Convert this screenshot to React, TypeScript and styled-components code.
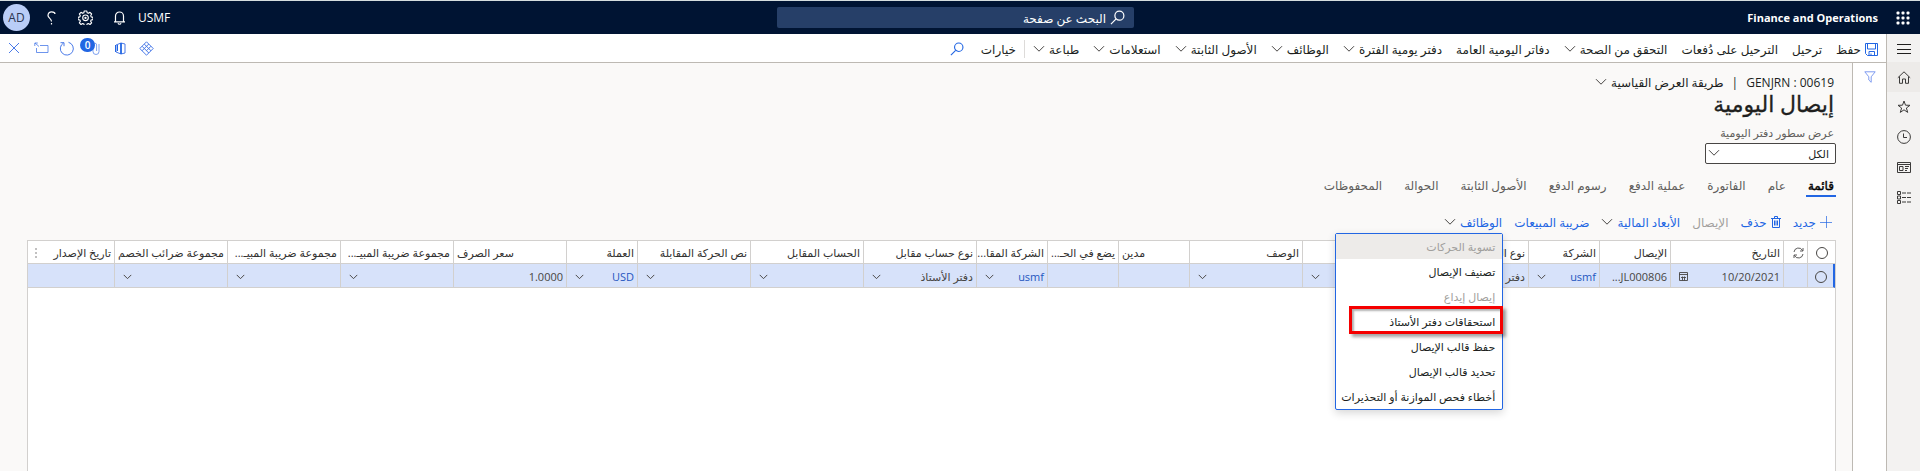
import React from 'react';
import styled, { createGlobalStyle, css } from 'styled-components';

const navy = '#001433';
const blue = '#2266e3';
const line = '#bdb9b3';
const gridLine = '#d2d0ce';

const GlobalStyle = createGlobalStyle`
  * { box-sizing: border-box; }
  body {
    margin: 0;
    background: #faf9f8;
    color: #201f1e;
    font-family: "Open Sans", "DejaVu Sans", sans-serif;
    font-size: 12px;
  }
  button, input, select { font: inherit; color: inherit; }
  button { padding: 0; border: 0; background: none; cursor: pointer; white-space: nowrap; }
  a { text-decoration: none; }
  svg { display: block; flex: none; fill: none; stroke: currentColor; }
`;

const Page = styled.div`
  display: flex;
  flex-direction: column;
  min-height: 100vh;
`;

const TopBar = styled.header`
  display: grid;
  grid-template-columns: 1fr 357px 1fr;
  align-items: center;
  height: 34px;
  padding: 0 10px 0 1px;
  border-top: 1px solid #d5dedf;
  background: ${navy};
  color: #fff;
`;

const Brand = styled.div`
  display: flex;
  align-items: center;
  gap: 18px;
  font-size: 11px;
  font-weight: 700;
`;

const IconButton = styled.button<{ $w?: number }>`
  display: flex;
  align-items: center;
  justify-content: center;
  width: ${p => p.$w ?? 34}px;
  height: 28px;
`;

const SearchBox = styled.label`
  display: flex;
  align-items: center;
  gap: 4px;
  height: 21px;
  padding: 0 9px;
  border-radius: 2px;
  background: #263f68;
`;

const SearchInput = styled.input`
  flex: 1;
  min-width: 0;
  padding: 2px 0 0;
  border: 0;
  outline: 0;
  background: none;
  &::placeholder { color: #fff; opacity: 1; }
`;

const Account = styled.div`
  display: flex;
  align-items: center;
  justify-content: flex-end;
`;

const Company = styled.button`
  margin-left: 2px;
`;

const Avatar = styled.button`
  width: 27px;
  height: 27px;
  margin: 0 4px 0 2px;
  border-radius: 50%;
  background: #b9cdf7;
  color: #2b3550;
`;

const Shell = styled.div`
  display: flex;
  flex: 1;
`;

const Rail = styled.nav`
  display: flex;
  flex-direction: column;
  width: 34px;
  border-left: 1px solid ${line};
  background: #f3f2f1;
  color: #3b3a39;
`;

const RailLink = styled.a<{ $active?: boolean }>`
  display: flex;
  align-items: center;
  justify-content: center;
  height: 30px;
  color: inherit;
  background: ${p => (p.$active ? '#edebe9' : 'none')};
`;

const RailToggle = styled(IconButton)`
  width: 100%;
  padding-top: 2px;
  color: #201f1e;
`;

const Main = styled.div`
  display: flex;
  flex: 1;
  flex-direction: column;
  min-width: 0;
`;

const ActionBar = styled.div`
  display: flex;
  align-items: center;
  height: 29px;
  padding-right: 8px;
  border-bottom: 1px solid ${line};
  background: #fff;
`;

const Actions = styled.div`
  display: flex;
  flex: 1;
  align-items: center;
  gap: 14px;
  padding-top: 2px;
`;

const MenuButton = styled.button<{ $tone?: 'blue' | 'muted' }>`
  display: flex;
  align-items: center;
  gap: 4px;
  line-height: 20px;
  color: ${p => (p.$tone === 'blue' ? blue : p.$tone === 'muted' ? '#a19f9d' : '#201f1e')};
`;

const ButtonText = styled.span`
  padding-top: 2px;
`;

const OptionsButton = styled(MenuButton)`
  height: 18px;
  padding-right: 8px;
  border-right: 1px solid #dddbd9;
  margin-right: -6px;
`;

const SearchAction = styled(IconButton)`
  margin-right: 2px;
`;

const ChevronIcon = styled.svg`
  color: #484644;
`;

const BlueIcon = styled.span`
  display: flex;
  color: ${blue};
`;

const SystemActions = styled.div`
  display: flex;
  color: #4a7ae8;
`;

const AttachButton = styled(IconButton)`
  position: relative;
`;

const Badge = styled.span`
  position: absolute;
  top: 4px;
  left: 3px;
  width: 15px;
  height: 14px;
  border-radius: 7px;
  background: ${blue};
  color: #fff;
  font-size: 10px;
  font-weight: 600;
  line-height: 14px;
`;

const Body = styled.div`
  display: flex;
  flex: 1;
`;

const FilterPane = styled.aside`
  width: 34px;
  border-left: 1px solid ${line};
  background: #fff;
  color: #7f9cf0;
`;

const FilterButton = styled(IconButton)`
  width: 100%;
`;

const Content = styled.main`
  display: flex;
  flex: 1;
  flex-direction: column;
  min-width: 0;
  padding: 8px 16px 0 27px;
`;

const Crumbs = styled.div`
  display: flex;
  align-items: center;
  gap: 8px;
  height: 21px;
  padding-right: 2px;
  line-height: 20px;
`;

const Title = styled.h1`
  margin: 0;
  padding-right: 2px;
  font-size: 22px;
  font-weight: 400;
  line-height: 22px;
  -webkit-text-stroke: 0.3px;
`;

const Field = styled.label`
  position: relative;
  display: flex;
  flex-direction: column;
  width: 131px;
  margin-top: 11px;
  color: #605e5c;
  font-size: 11px;
  line-height: 16px;
`;

const FieldLabel = styled.span`
  padding: 0 2px 2px 0;
`;

const Select = styled.select`
  height: 21px;
  padding: 0 6px;
  border: 1px solid #484644;
  border-radius: 2px;
  outline: 0;
  appearance: none;
  background: #fff;
  color: #201f1e;
`;

const SelectMark = styled.span`
  position: absolute;
  bottom: 7px;
  left: 3px;
  pointer-events: none;
`;

const Tabs = styled.div`
  display: flex;
  gap: 18px;
  margin-top: 11px;
`;

const Tab = styled.button<{ $active?: boolean }>`
  height: 22px;
  padding: 2px 2px 0;
  border-bottom: 2px solid ${p => (p.$active ? blue : 'transparent')};
  color: ${p => (p.$active ? '#000' : '#605e5c')};
  -webkit-text-stroke: ${p => (p.$active ? '0.4px' : '0')};
  line-height: 18px;
`;

const GridTools = styled.div`
  display: flex;
  gap: 12px;
  margin: 14px 0 7px;
  padding-right: 4px;
`;

const MenuAnchor = styled.div`
  position: relative;
`;

const Menu = styled.div`
  position: absolute;
  z-index: 2;
  top: 22px;
  right: -1px;
  display: flex;
  flex-direction: column;
  width: 168px;
  border: 1px solid ${blue};
  border-radius: 2px;
  background: #fff;
  box-shadow: 0 3px 8px rgba(0, 0, 0, 0.16);
`;

const MenuItem = styled.button<{ $marked?: boolean; $hover?: boolean }>`
  position: relative;
  height: 25px;
  padding: 0 7px;
  color: #201f1e;
  font-size: 11px;
  text-align: right;
  &:disabled { color: #a19f9d; }
  ${p => p.$hover && css`background: #edebe9;`}
  ${p => p.$marked && css`
    &::after {
      content: '';
      position: absolute;
      inset: -3px -1px 0 13px;
      border: 3px solid #f50000;
      box-shadow: 3px 3px 3px rgba(0, 0, 0, 0.35), inset 2px 2px 2px rgba(0, 0, 0, 0.3);
    }
  `}
`;

const GridBox = styled.div`
  flex: 1;
  border: 1px solid ${gridLine};
  border-bottom: 0;
  background: #fff;
  overflow: hidden;
`;

const Table = styled.table`
  width: 100%;
  table-layout: fixed;
  border-collapse: separate;
  border-spacing: 0;
  font-size: 11px;
`;

const Col = styled.col<{ $w?: number }>`
  width: ${p => (p.$w ? `${p.$w}px` : 'auto')};
`;

const cell = css`
  padding: 2px 3px 0;
  border-left: 1px solid ${gridLine};
  border-bottom: 1px solid ${gridLine};
  line-height: 18px;
  white-space: nowrap;
  overflow: hidden;
  &:last-child { border-left: 0; }
`;

const Th = styled.th<{ $end?: boolean }>`
  ${cell}
  height: 23px;
  color: #323130;
  font-weight: 400;
  text-align: ${p => (p.$end ? 'left' : 'right')};
`;

const Td = styled.td`
  ${cell}
  height: 24px;
  background: #d7e2fa;
  color: #484644;
  &:first-child { border-right: 2px solid ${blue}; }
`;

const CellRow = styled.div`
  display: flex;
  align-items: center;
  justify-content: space-between;
  padding-left: 5px;
`;

const CellLink = styled.a`
  color: #1f56c0;
`;

const RowCheck = styled.input`
  display: block;
  width: 12px;
  height: 12px;
  margin: 0 auto;
  border: 1px solid #484644;
  border-radius: 50%;
  appearance: none;
`;

const HeadEnd = styled.div`
  display: flex;
  align-items: center;
  justify-content: space-between;
  padding-left: 4px;
`;

const Chevron = ({ small }: { small?: boolean }) => (
  <ChevronIcon width={small ? 9 : 12} height={small ? 6 : 8} viewBox="0 0 12 8" aria-hidden="true">
    <path d="M1 1.2 6 6.2l5-5" strokeWidth={small ? 1.3 : 1} />
  </ChevronIcon>
);

const SearchIcon = ({ size }: { size: number }) => (
  <svg width={size} height={size} viewBox="0 0 16 16" strokeWidth="1.3" aria-hidden="true">
    <circle cx="10" cy="6" r="4.8" />
    <path d="M6.5 9.5 1 15" />
  </svg>
);

const Waffle = () => (
  <svg width="14" height="14" viewBox="0 0 14 14" aria-hidden="true">
    {[1, 6, 11].map(y =>
      [1, 6, 11].map(x => <rect key={`${x}-${y}`} x={x - 0.5} y={y - 0.5} width="3" height="3" rx="1" fill="currentColor" stroke="none" />),
    )}
  </svg>
);

const BellIcon = () => (
  <svg width="13" height="14" viewBox="0 0 13 14" strokeWidth="1.2" aria-hidden="true">
    <path d="M1 10.8h11M2.5 10.8V5a4 4 0 0 1 8 0v5.8M5 12.2a1.6 1.6 0 0 0 3 0" />
  </svg>
);

const GearIcon = () => (
  <svg width="15" height="15" viewBox="0 0 24 24" strokeWidth="1.8" strokeLinejoin="round" aria-hidden="true">
    <path d="M10 1.500h4l.7 3 1.800.8 2.700-1.600 2.600 2.700-1.500 2.700.8 1.900 2.900.8v3.500l-3 .8-.8 1.800 1.600 2.700-2.600 2.600-2.700-1.600-1.900.8-.7 2.900h-3.800l-.7-2.900-1.900-.8-2.700 1.600-2.600-2.600 1.600-2.700-.8-1.800-3-.8v-3.500l2.900-.8.8-1.900-1.500-2.700 2.600-2.700 2.700 1.600 1.800-.8z" />
    <circle cx="12" cy="12.500" r="4.500" />
    <circle cx="12" cy="12.500" r="1" />
  </svg>
);

const HelpIcon = () => (
  <svg width="9" height="14" viewBox="0 0 9 14" strokeWidth="1.2" aria-hidden="true">
    <path d="M1 4.500C1 2 2.600.8 4.600.8S8 1.800 8 3M1 4.500c0 2.500 3.500 2.800 3.500 6M4.500 12v1.600" />
  </svg>
);

const SaveIcon = () => (
  <svg width="13" height="13" viewBox="0 0 13 13" aria-hidden="true">
    <path d="M.5.5h12v12h-10l-2-2zM2.500.500v5.500h8V.500M4 12.500v-4h5.500v4M6 12.500v-2" />
  </svg>
);

const DiamondIcon = () => (
  <svg width="15" height="15" viewBox="0 0 15 15" aria-hidden="true">
    <path d="M7.500.8 14.200 7.500l-6.700 6.700L.8 7.500zM5.200 3l6.800 6.800M9.800 3 3 9.800M3 5.200l6.800 6.800M12 5.200 7.500 9.700" />
  </svg>
);

const OfficeIcon = () => (
  <svg width="12" height="13" viewBox="0 0 12 13" aria-hidden="true">
    <path d="M7 1 2 3v7l5 2M7 1l4 1v9l-4 1" />
    <path d="M7 1v11" strokeWidth="1.800" stroke={blue} />
    <path d="M1.500 3v7M3.500 3v6" stroke={blue} />
  </svg>
);

const ClipIcon = () => (
  <svg width="18" height="16" viewBox="0 0 18 16" aria-hidden="true">
    <path d="M16 4v7.500a3 3 0 0 1-6 0V5a1.800 1.800 0 0 1 3.600 0v6" opacity=".7" />
  </svg>
);

const RefreshIcon = () => (
  <svg width="15" height="15" viewBox="0 0 15 15" aria-hidden="true">
    <path d="M9.500 1.300a6.500 6.500 0 1 1-5 .7M1.500 1.700h3.500v3.500" />
  </svg>
);

const PopoutIcon = () => (
  <svg width="15" height="12" viewBox="0 0 15 12" aria-hidden="true">
    <path d="M6 3.500h8v7H2.500V6M1 1l4 3.500M.8 4V1h3" opacity=".8" />
  </svg>
);

const CloseIcon = () => (
  <svg width="12" height="12" viewBox="0 0 12 12" aria-hidden="true"><path d="m1 1 10 10M11 1 1 11" /></svg>
);

const FunnelIcon = () => (
  <svg width="12" height="12" viewBox="0 0 12 12" aria-hidden="true"><path d="M.8.8h10.400L7.200 5.800v5.500L4.800 9V5.800z" /></svg>
);

const MenuLines = () => (
  <svg width="14" height="10" viewBox="0 0 14 10" aria-hidden="true"><path d="M0 .5h14M0 5.500h14M0 9.500h14" /></svg>
);

const HomeIcon = () => (
  <svg width="14" height="13" viewBox="0 0 14 13" aria-hidden="true"><path d="M.8 6.800 7 .8l6.200 6M2.500 5.500v6.800h3V8h3v4.300h3V5.500" /></svg>
);

const StarIcon = () => (
  <svg width="14" height="14" viewBox="0 0 14 14" aria-hidden="true"><path d="m7 1 1.500 4.200 4.500.1-3.600 2.700 1.300 4.400L7 9.800l-3.700 2.600L4.600 8 1 5.300l4.500-.1z" /></svg>
);

const ClockIcon = () => (
  <svg width="14" height="14" viewBox="0 0 14 14" aria-hidden="true"><circle cx="7" cy="7" r="6.400" /><path d="M6.500 3.500v4H10" /></svg>
);

const WorkspaceIcon = () => (
  <svg width="14" height="11" viewBox="0 0 14 11" aria-hidden="true"><path d="M.5.5h13v10H.5zM.5 2.500h13M2.500 4.500H6v4H2.500zM8 4.500h4M8 6.500h3M8 8.500h2" /></svg>
);

const ListIcon = () => (
  <svg width="14" height="13" viewBox="0 0 14 13" aria-hidden="true"><path d="M.5.5h3v3h-3zM.5 5h3v3h-3zM.5 9.500h3v3h-3z" /><path d="M5 2h9M5 6.500h9M5 11h9" strokeDasharray="4 1" /></svg>
);

const PlusIcon = () => (
  <svg width="12" height="12" viewBox="0 0 12 12" aria-hidden="true"><path d="M0 6.500h12M6.500 0v12" opacity=".7" /></svg>
);

const TrashIcon = () => (
  <svg width="10" height="12" viewBox="0 0 10 12" aria-hidden="true"><path d="M0 2.500h10M3.500 2V.500h3V2M1.500 2.500v9h7v-9M3.500 4.500v5M5 4.500v5M6.500 4.500v5" /></svg>
);

const SyncIcon = () => (
  <svg width="11" height="12" viewBox="0 0 11 12" strokeWidth=".8" aria-hidden="true"><path d="M1 5a4.500 4.500 0 0 1 8.500-1.500M10 1v3H7M10 7a4.500 4.500 0 0 1-8.500 1.500M1 11V8h3" /></svg>
);

const CalendarIcon = () => (
  <svg width="9" height="9" viewBox="0 0 9 9" aria-hidden="true"><path d="M.5.5h8v8h-8zM0 2.500h9M3.500 4.500v4M5.500 4.500v4M2 5.500h5" strokeWidth=".9" /></svg>
);

const DotsIcon = () => (
  <svg width="2" height="10" viewBox="0 0 2 10" aria-hidden="true"><path d="M1 0v10" strokeDasharray="2 2" opacity=".6" /></svg>
);

const actions: { label: string; menu?: boolean }[] = [
  { label: 'ترحيل' },
  { label: 'الترحيل على دُفعات' },
  { label: 'التحقق من الصحة', menu: true },
  { label: 'دفاتر اليومية العامة' },
  { label: 'دفتر يومية الفترة', menu: true },
  { label: 'الوظائف', menu: true },
  { label: 'الأصول الثابتة', menu: true },
  { label: 'استعلامات', menu: true },
  { label: 'طباعة', menu: true },
];

const tabs = ['قائمة', 'عام', 'الفاتورة', 'عملية الدفع', 'رسوم الدفع', 'الأصول الثابتة', 'الحوالة', 'المحفوظات'];

const functions = [
  { label: 'تسوية الحركات', disabled: true, hover: true },
  { label: 'تصنيف الإيصال' },
  { label: 'إيصال إيداع', disabled: true },
  { label: 'استحقاقات دفتر الأستاذ', marked: true },
  { label: 'حفظ قالب الإيصال' },
  { label: 'تحديد قالب الإيصال' },
  { label: 'أخطاء فحص الموازنة أو التحذيرات' },
];

interface Column {
  head: string;
  width: number;
  value?: string;
  link?: boolean;
  lookup?: boolean;
  date?: boolean;
  numeric?: boolean;
}

const columns: Column[] = [
  { head: 'التاريخ', width: 113, value: '10/20/2021', date: true },
  { head: 'الإيصال', width: 71, value: '...JL000806' },
  { head: 'الشركة', width: 71, value: 'usmf', link: true, lookup: true },
  { head: 'نوع الحساب', width: 113, value: 'دفتر الأستاذ', lookup: true },
  { head: 'الحساب', width: 113, lookup: true },
  { head: 'الوصف', width: 113, lookup: true },
  { head: 'مدين', width: 71, numeric: true },
  { head: 'يضع في الحـ...', width: 71 },
  { head: 'الشركة المقا...', width: 71, value: 'usmf', link: true, lookup: true },
  { head: 'نوع حساب مقابل', width: 113, value: 'دفتر الأستاذ', lookup: true },
  { head: 'الحساب المقابل', width: 113, lookup: true },
  { head: 'نص الحركة المقابلة', width: 113, lookup: true },
  { head: 'العملة', width: 71, value: 'USD', link: true, lookup: true },
  { head: 'سعر الصرف', width: 113, value: '1.0000', numeric: true },
  { head: 'مجموعة ضريبة المبيـ...', width: 113, lookup: true },
  { head: 'مجموعة ضريبة المبيـ...', width: 113, lookup: true },
  { head: 'مجموعة ضرائب الخصم', width: 113, lookup: true },
];

export default function App() {
  return (
    <Page dir="rtl">
      <GlobalStyle />
      <TopBar>
        <Brand>
          <IconButton $w={14} aria-label="التطبيقات"><Waffle /></IconButton>
          <span dir="ltr">Finance and Operations</span>
        </Brand>
        <SearchBox>
          <SearchIcon size={15} />
          <SearchInput type="search" placeholder="البحث عن صفحة" aria-label="البحث عن صفحة" />
        </SearchBox>
        <Account>
          <Company>USMF</Company>
          <IconButton aria-label="الإشعارات"><BellIcon /></IconButton>
          <IconButton aria-label="الإعدادات"><GearIcon /></IconButton>
          <IconButton aria-label="التعليمات"><HelpIcon /></IconButton>
          <Avatar>AD</Avatar>
        </Account>
      </TopBar>
      <Shell>
        <Rail>
          <RailToggle aria-label="القائمة"><MenuLines /></RailToggle>
          <RailLink href="#home" $active aria-label="الصفحة الرئيسية"><HomeIcon /></RailLink>
          <RailLink href="#favorites" aria-label="المفضلة"><StarIcon /></RailLink>
          <RailLink href="#recent" aria-label="الأخيرة"><ClockIcon /></RailLink>
          <RailLink href="#workspaces" aria-label="مساحات العمل"><WorkspaceIcon /></RailLink>
          <RailLink href="#modules" aria-label="الوحدات"><ListIcon /></RailLink>
        </Rail>
        <Main>
          <ActionBar>
            <Actions>
              <MenuButton><BlueIcon><SaveIcon /></BlueIcon><ButtonText>حفظ</ButtonText></MenuButton>
              {actions.map(a => (
                <MenuButton key={a.label}><ButtonText>{a.label}</ButtonText>{a.menu && <Chevron />}</MenuButton>
              ))}
              <OptionsButton><ButtonText>خيارات</ButtonText></OptionsButton>
              <SearchAction $w={16} aria-label="بحث"><BlueIcon><SearchIcon size={14} /></BlueIcon></SearchAction>
            </Actions>
            <SystemActions>
              <IconButton $w={27} aria-label="Power Apps"><DiamondIcon /></IconButton>
              <IconButton $w={27} aria-label="Office"><OfficeIcon /></IconButton>
              <AttachButton $w={29} aria-label="المرفقات"><ClipIcon /><Badge>0</Badge></AttachButton>
              <IconButton $w={21} aria-label="تحديث"><RefreshIcon /></IconButton>
              <IconButton $w={29} aria-label="فتح في نافذة جديدة"><PopoutIcon /></IconButton>
              <IconButton $w={27} aria-label="إغلاق"><CloseIcon /></IconButton>
            </SystemActions>
          </ActionBar>
          <Body>
            <FilterPane>
              <FilterButton aria-label="عامل التصفية"><FunnelIcon /></FilterButton>
            </FilterPane>
            <Content>
              <Crumbs>
                <ButtonText dir="ltr">GENJRN : 00619</ButtonText>
                <ButtonText>|</ButtonText>
                <MenuButton><ButtonText>طريقة العرض القياسية</ButtonText><Chevron /></MenuButton>
              </Crumbs>
              <Title>إيصال اليومية</Title>
              <Field>
                <FieldLabel>عرض سطور دفتر اليومية</FieldLabel>
                <Select defaultValue="all"><option value="all">الكل</option></Select>
                <SelectMark><Chevron /></SelectMark>
              </Field>
              <Tabs role="tablist">
                {tabs.map((t, i) => (
                  <Tab key={t} role="tab" aria-selected={i === 0} $active={i === 0}>{t}</Tab>
                ))}
              </Tabs>
              <GridTools>
                <MenuButton $tone="blue"><PlusIcon /><ButtonText>جديد</ButtonText></MenuButton>
                <MenuButton $tone="blue"><TrashIcon /><ButtonText>حذف</ButtonText></MenuButton>
                <MenuButton $tone="muted" disabled><ButtonText>الإيصال</ButtonText></MenuButton>
                <MenuButton $tone="blue"><ButtonText>الأبعاد المالية</ButtonText><Chevron /></MenuButton>
                <MenuButton $tone="blue"><ButtonText>ضريبة المبيعات</ButtonText></MenuButton>
                <MenuAnchor>
                  <MenuButton $tone="blue" aria-expanded="true"><ButtonText>الوظائف</ButtonText><Chevron /></MenuButton>
                  <Menu>
                    {functions.map(f => (
                      <MenuItem key={f.label} disabled={f.disabled} $hover={f.hover} $marked={f.marked}>{f.label}</MenuItem>
                    ))}
                  </Menu>
                </MenuAnchor>
              </GridTools>
              <GridBox>
                <Table>
                  <colgroup>
                    <Col $w={28} />
                    <Col $w={24} />
                    {columns.map((c, i) => <Col key={i} $w={c.width} />)}
                    <Col />
                  </colgroup>
                  <thead>
                    <tr>
                      <Th><RowCheck type="checkbox" aria-label="تحديد الكل" /></Th>
                      <Th aria-label="تحديث"><SyncIcon /></Th>
                      {columns.map((c, i) => <Th key={i} $end={c.numeric}>{c.head}</Th>)}
                      <Th><HeadEnd>تاريخ الإصدار<DotsIcon /></HeadEnd></Th>
                    </tr>
                  </thead>
                  <tbody>
                    <tr>
                      <Td><RowCheck type="checkbox" aria-label="تحديد الصف" /></Td>
                      <Td />
                      {columns.map((c, i) => (
                        <Td key={i}>
                          <CellRow>
                            {c.link ? <CellLink href="#details">{c.value}</CellLink> : <span dir={c.value && /\d/.test(c.value) ? 'ltr' : undefined}>{c.value}</span>}
                            {c.lookup && <Chevron small />}
                            {c.date && <CalendarIcon />}
                          </CellRow>
                        </Td>
                      ))}
                      <Td />
                    </tr>
                  </tbody>
                </Table>
              </GridBox>
            </Content>
          </Body>
        </Main>
      </Shell>
    </Page>
  );
}
